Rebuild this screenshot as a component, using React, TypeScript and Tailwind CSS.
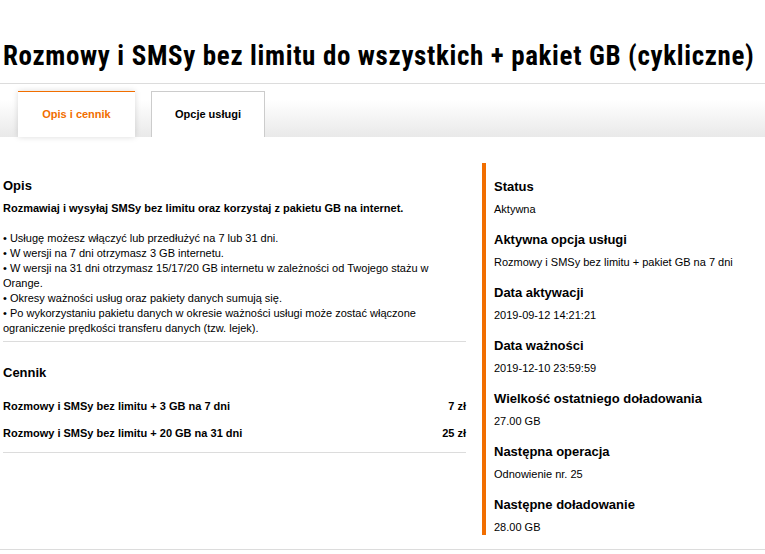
const bullets = [
  'Usługę możesz włączyć lub przedłużyć na 7 lub 31 dni.',
  'W wersji na 7 dni otrzymasz 3 GB internetu.',
  'W wersji na 31 dni otrzymasz 15/17/20 GB internetu w zależności od Twojego stażu w Orange.',
  'Okresy ważności usług oraz pakiety danych sumują się.',
  'Po wykorzystaniu pakietu danych w okresie ważności usługi może zostać włączone ograniczenie prędkości transferu danych (tzw. lejek).',
];

const cennik = [
  { nazwa: 'Rozmowy i SMSy bez limitu + 3 GB na 7 dni', cena: '7 zł' },
  { nazwa: 'Rozmowy i SMSy bez limitu + 20 GB na 31 dni', cena: '25 zł' },
];

const szczegoly = [
  { label: 'Status', value: 'Aktywna' },
  { label: 'Aktywna opcja usługi', value: 'Rozmowy i SMSy bez limitu + pakiet GB na 7 dni' },
  { label: 'Data aktywacji', value: '2019-09-12 14:21:21' },
  { label: 'Data ważności', value: '2019-12-10 23:59:59' },
  { label: 'Wielkość ostatniego doładowania', value: '27.00 GB' },
  { label: 'Następna operacja', value: 'Odnowienie nr. 25' },
  { label: 'Następne doładowanie', value: '28.00 GB' },
];

const narrow = { fontFamily: '"Liberation Sans Narrow", "Roboto Condensed", "Liberation Sans", Arial, sans-serif' };

export default function App() {
  return (
    <div className="w-[765px] h-[554px] bg-white text-black overflow-hidden font-['Liberation_Sans',Arial,sans-serif]">
      <h1 style={narrow} className="pt-[40px] pl-[3px] text-[27px] font-bold leading-[32px] tracking-[0.65px] whitespace-nowrap">
        Rozmowy i SMSy bez limitu do wszystkich + pakiet GB (cykliczne)
      </h1>
      <div className="mt-[11px] border-t border-[#dcdcdc]" />

      {/* Tabs */}
      <div className="mt-[7px] h-[46px] flex gap-4 pl-[18px] bg-gradient-to-b from-white from-20% to-[#e9e9e9]">
        <div className="w-[117px] flex items-center justify-center bg-white border-t border-[#f16e00] text-[11px] font-bold text-[#f16e00] shadow-[0_0_6px_rgba(0,0,0,0.15)]">
          Opis i cennik
        </div>
        <div className="w-[114px] flex items-center justify-center bg-white border border-b-0 border-[#cccccc] text-[11px] font-bold">
          Opcje usługi
        </div>
      </div>

      <div className="flex">
        {/* Left */}
        <div className="w-[463px] ml-[3px] pt-[41px]">
          <h2 className="text-[13px] font-bold leading-4">Opis</h2>
          <p className="mt-[6px] text-[11px] font-bold leading-4">
            Rozmawiaj i wysyłaj SMSy bez limitu oraz korzystaj z pakietu GB na internet.
          </p>
          <ul className="mt-[15px] text-[11px] leading-[15px]">
            {bullets.map((b) => (
              <li key={b}>• {b}</li>
            ))}
          </ul>
          <div className="mt-[5px] border-t border-[#dcdcdc]" />
          <h2 className="mt-[23px] text-[13px] font-bold leading-4">Cennik</h2>
          <div className="mt-[17px] flex flex-col gap-[11px] text-[11px] font-bold leading-4">
            {cennik.map((c) => (
              <div key={c.nazwa} className="flex justify-between">
                <span>{c.nazwa}</span>
                <span>{c.cena}</span>
              </div>
            ))}
          </div>
          <div className="mt-[11px] border-t border-[#dcdcdc]" />
        </div>

        {/* Right */}
        <div className="ml-[16px] mt-[26px] h-[372px] border-l-4 border-[#f16e00] pl-[8px] pt-[16px]">
          <div className="flex flex-col gap-[15px]">
            {szczegoly.map((s) => (
              <div key={s.label}>
                <div className="text-[13px] font-bold leading-4">{s.label}</div>
                <div className="mt-[6px] text-[11px] leading-4">{s.value}</div>
              </div>
            ))}
          </div>
        </div>
      </div>

      <div className="mt-[14px] border-t border-[#dcdcdc]" />
    </div>
  );
}
